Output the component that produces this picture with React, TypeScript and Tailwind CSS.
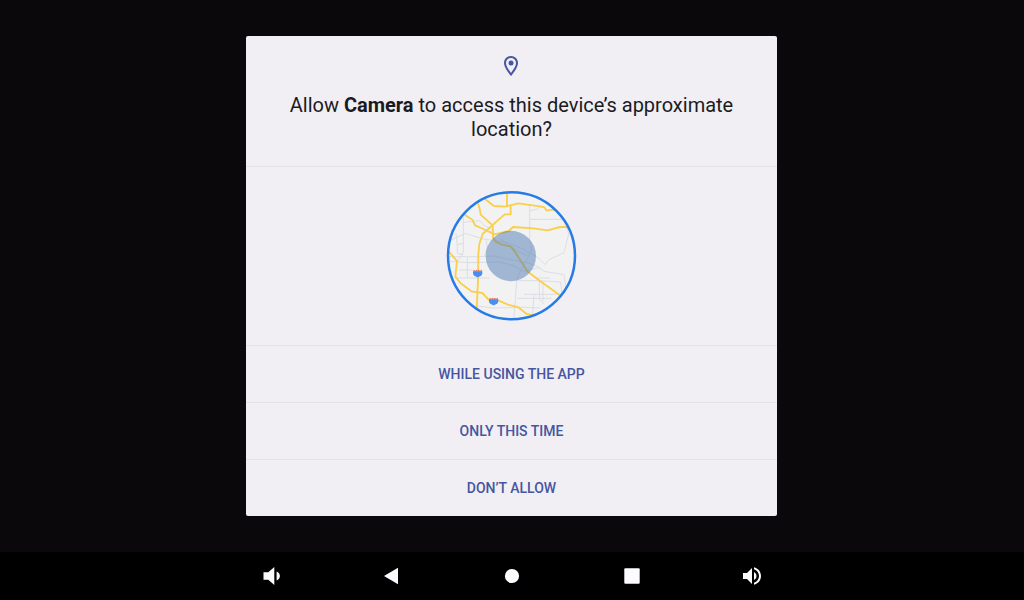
import type { ReactNode } from "react";

function PinIcon() {
  return (
    <svg viewBox="0 0 25 24" className="h-6 w-[25px] fill-[#4656a0]" aria-hidden="true">
      <path d="M12 2C8.13 2 5 5.13 5 9c0 5.25 7 13 7 13s7-7.75 7-13c0-3.87-3.13-7-7-7zM7 9c0-2.76 2.24-5 5-5s5 2.24 5 5c0 2.88-2.88 7.19-5 9.88C9.92 16.21 7 11.85 7 9z" />
      <circle cx="12" cy="9" r="2.5" />
    </svg>
  );
}

function Shield({ x, y }: { x: number; y: number }) {
  return (
    <g transform={`translate(${x} ${y})`}>
      <path d="M-14 -4C-15 3 -12 8 -7 10C-5 11 -3 13 0 13C3 13 5 11 7 10C12 8 15 3 14 -4Z" fill="#4a8df0" />
      <path d="M-14 -3L-12 -10L-7 -7L-3 -10L0 -7L3 -10L7 -7L12 -10L14 -3Z" fill="#d9786f" />
    </g>
  );
}

function MapPreview() {
  return (
    <svg
      viewBox="18 21 393 390"
      className="h-[130px] w-[131px]"
      fill="none"
      role="img"
      aria-label="Approximate location map"
    >
      <defs>
        <clipPath id="map-clip">
          <circle cx="214.5" cy="215.5" r="191" />
        </clipPath>
      </defs>
      <circle cx="214.5" cy="215.5" r="191" fill="#f2f2f3" />
      <g clipPath="url(#map-clip)">
        <g stroke="#d9dae2" strokeWidth="2.5">
          <path d="M269 62V172L275 195L262 225L240 262L230 290L222 400" />
          <path d="M269 106H368M269 80L290 76L300 68" />
          <path d="M70 100V205L52 232M70 115L120 110L130 122L160 140" />
          <path d="M30 170L75 148L130 165L200 175L250 195L295 222L316 242L325 228L372 206L386 150L380 130" />
          <path d="M48 148L52 182V208L70 212M52 182L72 178" />
          <path d="M26 218H110L160 216L205 226L262 236L290 246L312 262L372 272L376 300V322" />
          <path d="M30 232L90 236L180 234L222 246L250 262L300 250" />
          <path d="M82 220V282M46 282H150M58 258H98" />
          <path d="M232 290H300L362 294L366 330M270 270L290 282H330" />
          <path d="M252 331H362M298 290V345L312 360M309 292V350M232 343H335" />
          <path d="M110 366L160 372L250 370L300 372M282 332L278 390" />
          <path d="M138 165L142 190L134 215M180 165L230 200L262 215" />
        </g>
        <g stroke="#f9cf4b" strokeWidth="5.5" strokeLinejoin="round">
          <path d="M136 46L162 66L195 68L235 58L300 67L313 70L319 79L345 77" />
          <path d="M201 25V68M212 66V91H194L160 121L128 150L118 180L115 210L114 290L110 375" />
          <path d="M114 58L119 74L122 92L158 124L159 160L166 172L184 181L212 187L224 202L262 262L300 291L362 335" />
          <path d="M74 92L97 107L105 124L130 135L164 151L207 141L219 129L280 133L322 139L360 129H390" />
          <path d="M22 198L51 231L46 278L62 298L94 322L127 327L148 349L176 350L204 362L235 370L260 390L282 394" />
        </g>
        <Shield x={113} y={267} />
        <Shield x={161} y={351} />
        <circle cx="212.5" cy="216" r="75.5" fill="#4775ad" fillOpacity="0.48" />
      </g>
      <circle cx="214.5" cy="215.5" r="190.5" stroke="#277be5" strokeWidth="7.5" />
    </svg>
  );
}

function DialogButton({ children }: { children: ReactNode }) {
  return (
    <button
      type="button"
      className="h-[57px] w-full border-t border-[#e2e2e7] text-sm font-medium text-[#4656a0] uppercase"
    >
      {children}
    </button>
  );
}

function NavButton({ label, children }: { label: string; children: ReactNode }) {
  return (
    <button type="button" aria-label={label} className="flex h-12 flex-1 items-center justify-center">
      <svg viewBox="0 0 24 24" className="size-6 fill-[#fdfbff]" aria-hidden="true">
        {children}
      </svg>
    </button>
  );
}

export default function App() {
  return (
    <div className="flex min-h-screen flex-col bg-[#0a080b] font-['Roboto',sans-serif]">
      <main className="flex flex-1 items-center justify-center pr-px">
        <section
          role="dialog"
          aria-labelledby="dialog-title"
          className="w-full max-w-[531px] overflow-hidden rounded-xs bg-[#f1eff4]"
        >
          <header className="flex flex-col items-center gap-[15px] px-6 pt-[18px] pb-[25px]">
            <PinIcon />
            <h1 id="dialog-title" className="text-center text-xl leading-6 font-normal text-[#1b1b1f]">
              Allow <b className="font-bold">Camera</b> to access this device’s approximate location?
            </h1>
          </header>
          <div className="flex justify-center border-t border-[#e2e2e7] py-6">
            <MapPreview />
          </div>
          <DialogButton>While using the app</DialogButton>
          <DialogButton>Only this time</DialogButton>
          <DialogButton>Don’t allow</DialogButton>
        </section>
      </main>
      <nav aria-label="System" className="flex h-12 justify-center bg-black">
        <div className="flex w-full max-w-[600px]">
          <NavButton label="Volume down">
            <path d="M3.5 8.3V15.7H8.3L14.3 21V3L8.3 8.3ZM16.6 7.5V16.5C18.6 15.6 19.9 14 19.9 12S18.6 8.4 16.6 7.5Z" />
          </NavButton>
          <NavButton label="Back">
            <path d="M4 12L18 3.7V20.3Z" />
          </NavButton>
          <NavButton label="Home">
            <circle cx="12" cy="12" r="7.1" />
          </NavButton>
          <NavButton label="Overview">
            <rect x="4.3" y="4.3" width="15.4" height="15.4" rx="1" />
          </NavButton>
          <NavButton label="Volume up">
            <path d="M3 9v6h4l5 5V4L7 9H3zm13.5 3c0-1.77-1.02-3.29-2.5-4.03v8.05c1.48-.73 2.5-2.25 2.5-4.02zM14 3.23v2.06c2.89.86 5 3.54 5 6.71s-2.11 5.85-5 6.71v2.06c4.01-.91 7-4.49 7-8.77s-2.99-7.86-7-8.77z" />
          </NavButton>
        </div>
      </nav>
    </div>
  );
}
